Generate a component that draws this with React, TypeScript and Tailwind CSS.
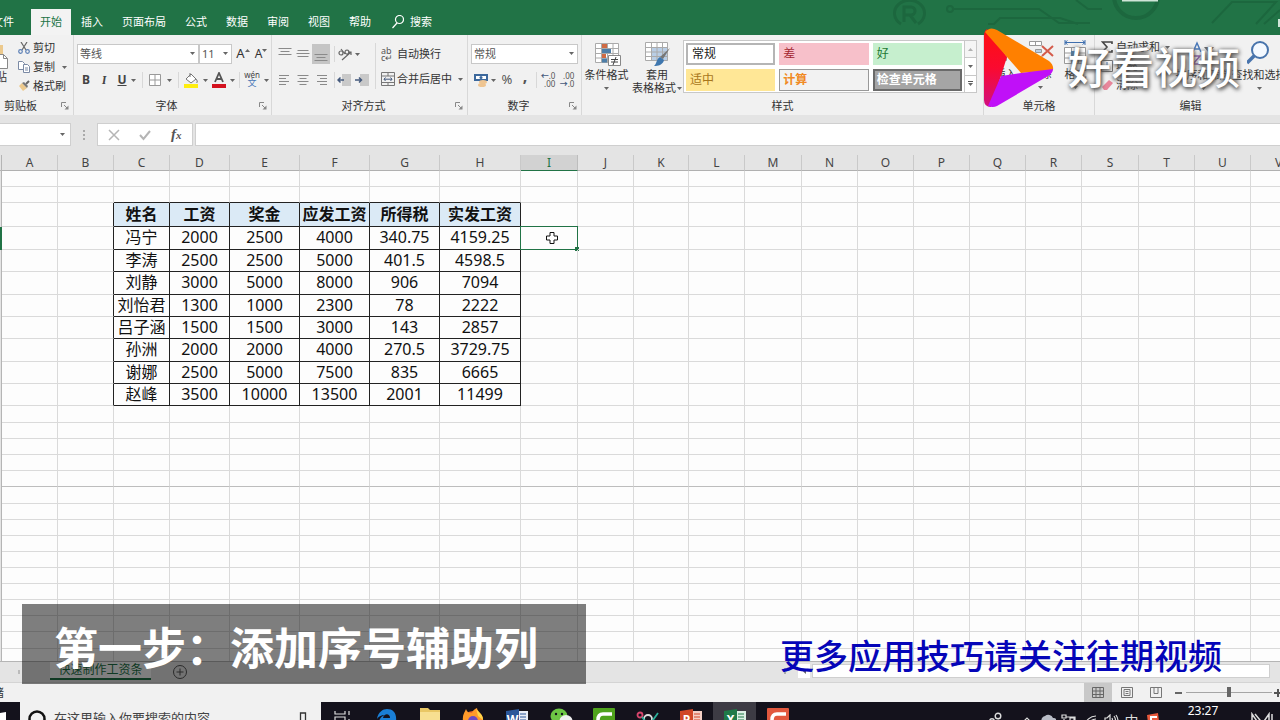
import React from 'react';

const columns = [
  { name: 'A', width: 'w-14' },
  { name: 'B', width: 'w-14' },
  { name: 'C', width: 'w-14' },
  { name: 'D', width: 'w-[60px]' },
  { name: 'E', width: 'w-[70px]' },
  { name: 'F', width: 'w-[70px]' },
  { name: 'G', width: 'w-[70px]' },
  { name: 'H', width: 'w-[81px]' },
  { name: 'I', width: 'w-[57px]' },
  { name: 'J', width: 'w-14' },
  { name: 'K', width: 'w-[55px]' },
  { name: 'L', width: 'w-14' },
  { name: 'M', width: 'w-[57px]' },
  { name: 'N', width: 'w-14' },
  { name: 'O', width: 'w-14' },
  { name: 'P', width: 'w-14' },
  { name: 'Q', width: 'w-14' },
  { name: 'R', width: 'w-14' },
  { name: 'S', width: 'w-[57px]' },
  { name: 'T', width: 'w-14' },
  { name: 'U', width: 'w-14' },
  { name: 'V', width: 'w-14' },
];

const FIRST_COL = 2;
const LAST_COL = 7;
const FIRST_ROW = 2;

const payroll = [
  ['姓名', '工资', '奖金', '应发工资', '所得税', '实发工资'],
  ['冯宁', '2000', '2500', '4000', '340.75', '4159.25'],
  ['李涛', '2500', '2500', '5000', '401.5', '4598.5'],
  ['刘静', '3000', '5000', '8000', '906', '7094'],
  ['刘怡君', '1300', '1000', '2300', '78', '2222'],
  ['吕子涵', '1500', '1500', '3000', '143', '2857'],
  ['孙洲', '2000', '2000', '4000', '270.5', '3729.75'],
  ['谢娜', '2500', '5000', '7500', '835', '6665'],
  ['赵峰', '3500', '10000', '13500', '2001', '11499'],
];

const S = 'h-4';
const M = 'h-[17px]';
const L = 'h-[22px]';
const X = 'h-[23px]';
const rowHeights = [S, S, 'h-6', X, L, X, L, L, X, L, L, M, S, S, S, S, M, S, S, S, S, S, S, S, S, M, S];

const Caret = ({ className = '' }: { className?: string }) => (
  <svg className={`h-[3px] w-[5px] shrink-0 ${className}`} viewBox="0 0 5 3" fill="#666">
    <path d="M0 0h5L2.5 3z" />
  </svg>
);

const Sep = () => <span className="h-4 w-px shrink-0 bg-[#d8d8d8]" />;

const IconButton = ({ label, className = 'w-[18px]', children }: { label: string; className?: string; children: React.ReactNode }) => (
  <button type="button" aria-label={label} className={`flex h-5 shrink-0 items-center justify-center ${className}`}>
    {children}
  </button>
);

const Lines = ({ y, widths, align = 'center' }: { y: number; widths: number[]; align?: 'left' | 'center' | 'right' }) => (
  <svg className="h-4 w-3.5" viewBox="0 0 14 16" stroke="#8a8a8a">
    {widths.map((w, i) => {
      const x = align === 'left' ? 1 : align === 'right' ? 13 - w : 7 - w / 2;
      return <path key={i} d={`M${x} ${y + i * 3}h${w}`} />;
    })}
  </svg>
);

const Group = ({ label, className, launcher, children }: { label: string; className: string; launcher?: boolean; children: React.ReactNode }) => (
  <section aria-label={label} className={`flex h-20 flex-col border-r border-[#d8d8d8] ${className}`}>
    <div className="flex h-[62px] min-w-0">{children}</div>
    <div className="flex h-[18px] items-center">
      <span className="flex-1 text-center leading-4">{label}</span>
      {launcher && (
        <button type="button" aria-label={`${label}设置`} className="w-3">
          <svg className="h-2 w-2" viewBox="0 0 8 8" fill="none" stroke="#888">
            <path d="M.5 5V.5H5M3 3l3 3" />
            <path d="M7.5 3.500v4h-4z" fill="#888" stroke="none" />
          </svg>
        </button>
      )}
    </div>
  </section>
);

const Picker = ({ label, value, className }: { label: string; value: string; className: string }) => (
  <span className={`relative block h-5 shrink-0 ${className}`}>
    <select aria-label={label} className="h-5 w-full appearance-none border border-[#c8c8c8] bg-white pl-0.5 text-[11px] leading-4 text-[#555]" defaultValue={value}>
      <option>{value}</option>
    </select>
    <Caret className="pointer-events-none absolute right-1 top-2" />
  </span>
);

const tabs = ['插入', '页面布局', '公式', '数据', '审阅', '视图', '帮助'];

const TitleBar = () => (
  <header className="relative flex h-[35px] shrink-0 items-end overflow-hidden bg-[#217346] text-white">
    <svg className="absolute right-0 top-0 h-[35px] w-[400px]" viewBox="0 0 400 35" fill="none" stroke="#1c673e" strokeWidth="2">
      <path d="M21 24A15 13 0 1 1 38 24" strokeWidth="3" />
      <path d="M24 22V7h7a4 4 0 0 1 0 8h-6m5 0 6 8" strokeWidth="3" />
      <circle cx="70" cy="9" r="3" />
      <path d="M73 9h86l20 14h31M108 24h6l6-6h60l18 6" />
      <path d="M196 0l12 9h14" />
      <circle cx="256" cy="-4" r="22" strokeWidth="4" />
      <path d="M332 23 352 2h44L376 24M384 24l16-14" />
      <path d="M242 .5h36" stroke="#cfe5d8" />
      <path d="M399 19v8" stroke="#cfe5d8" />
    </svg>
    <nav className="-ml-[17px] flex h-[26px] gap-px text-[11px] leading-6">
      <button type="button" className="mr-[7px] px-[9px]">文件</button>
      <button type="button" className="bg-[#f3f3f3] px-[9px] text-[#217346]">开始</button>
      {tabs.map((t) => (
        <button key={t} type="button" className="px-[9px]">{t}</button>
      ))}
      <button type="button" className="ml-0.5 flex items-center gap-[6px] px-[9px]">
        <svg className="h-3.5 w-3" viewBox="0 0 12 14" fill="none" stroke="white" strokeWidth="1.200">
          <circle cx="7.500" cy="4.500" r="4" />
          <path d="M5 8 .5 13" />
        </svg>
        搜索
      </button>
    </nav>
  </header>
);

const ClipboardGroup = () => (
  <Group label="剪贴板" className="-ml-5 w-[94px] shrink-0" launcher>
    <button type="button" className="flex w-8 flex-col items-center pt-[7px]">
      <svg className="h-[27px] w-6" viewBox="0 0 24 27">
        <path d="M2 3h17v20H2z" fill="#ecc98d" />
        <path d="M6 1h9v4H6z" fill="#777" />
        <path d="M13.500 12.500h6l4 4v10h-10z" fill="white" stroke="#888" />
        <path d="M19.500 12.500v4h4" fill="none" stroke="#888" />
      </svg>
      <span className="leading-4">粘贴</span>
      <Caret className="mt-1" />
    </button>
    <div className="ml-[6px] flex flex-col gap-[3px] pt-[5px]">
      <button type="button" className="flex h-4 items-center gap-[3px]">
        <svg className="h-3 w-3" viewBox="0 0 12 12" fill="none" stroke="#666" strokeWidth="1.200">
          <path d="M3 0l5 8M9 0 4 8" />
          <circle cx="2.500" cy="9.500" r="1.800" stroke="#5b7fb5" />
          <circle cx="9.500" cy="9.500" r="1.800" stroke="#5b7fb5" />
        </svg>
        剪切
      </button>
      <button type="button" className="flex h-4 items-center gap-[3px]">
        <svg className="h-3 w-3" viewBox="0 0 12 12" fill="white" stroke="#7b8aa5">
          <path d="M.5.5h4l2 2v6h-6z" />
          <path d="M5.500 3.500h4l2 2v6h-6zM7 7h3M7 9h3" />
        </svg>
        复制
        <Caret className="ml-1" />
      </button>
      <button type="button" className="flex h-4 items-center gap-[3px]">
        <svg className="h-3 w-3" viewBox="0 0 12 12">
          <path d="M1 6l3-3 5 5-4 3z" fill="#ecc98d" />
          <path d="M4 3l2-1 4 4-1 2z" fill="#777" />
          <path d="M8 4l3-3" stroke="#666" strokeWidth="2" />
        </svg>
        格式刷
      </button>
    </div>
  </Group>
);

const FontGroup = () => (
  <Group label="字体" className="w-[198px] shrink-0" launcher>
    <div className="flex flex-col gap-[6px] pl-[3px] pt-[9px]">
      <div className="flex items-center">
        <Picker label="字体名称" value="等线" className="w-[122px]" />
        <Picker label="字号" value="11" className="w-[33px]" />
        <IconButton label="增大字号" className="ml-[2px] w-[18px] text-[13px]">
          A<Caret className="mb-2 rotate-180" />
        </IconButton>
        <IconButton label="减小字号" className="w-[18px] text-[12px]">
          A<Caret className="mb-2" />
        </IconButton>
      </div>
      <div className="flex items-center text-[12px] text-[#444]">
        <IconButton label="加粗"><b>B</b></IconButton>
        <IconButton label="倾斜"><b className="font-serif italic">I</b></IconButton>
        <IconButton label="下划线"><b className="underline">U</b></IconButton>
        <Caret className="mr-1.5" />
        <Sep />
        <IconButton label="边框" className="w-6">
          <svg className="h-3 w-3" viewBox="0 0 12 12" fill="white" stroke="#999">
            <path d="M.5.5h11v11H.5zM6 .5v11M.5 6h11" />
          </svg>
        </IconButton>
        <Caret className="mr-1.5" />
        <Sep />
        <IconButton label="填充颜色" className="w-6">
          <svg className="h-4 w-4" viewBox="0 0 16 16" fill="none">
            <path d="M3 7l5-5 5 5-5 4z" fill="white" stroke="#777" />
            <path d="M7 5V1M13 7c1 1 2 3 .5 4" stroke="#777" />
            <path d="M1 12h14v4H1z" fill="#ffee10" />
          </svg>
        </IconButton>
        <Caret />
        <IconButton label="字体颜色" className="w-[22px]">
          <svg className="h-4 w-4" viewBox="0 0 16 16" fill="none">
            <path d="M4 10 8 1l4 9M5.500 7h5" stroke="#555" strokeWidth="1.800" />
            <path d="M1 12h14v4H1z" fill="#d4121f" />
          </svg>
        </IconButton>
        <Caret className="mr-1" />
        <Sep />
        <IconButton label="拼音" className="w-6 flex-col">
          <span className="text-[8px] leading-[6px]">wén</span>
          <span className="text-[9px] leading-[10px] text-[#4a78b8]">文</span>
        </IconButton>
        <Caret />
      </div>
    </div>
  </Group>
);

const Indent = ({ flip }: { flip?: boolean }) => (
  <svg className="h-3.5 w-3.5" viewBox="0 0 14 14">
    <path d="M5 1h9v12H5z" fill="#c9c9c9" />
    <path d={flip ? 'M0 7h6M4 4.500 6.500 7 4 9.500' : 'M1 7h6M3.500 4.500 1 7l2.500 2.500'} fill="none" stroke="#44597c" strokeWidth="1.500" />
  </svg>
);

const AlignGroup = () => (
  <Group label="对齐方式" className="w-[196px] shrink-0" launcher>
    <div className="flex flex-col gap-[6px] pl-1 pt-[9px]">
      <div className="flex items-center">
        <IconButton label="顶端对齐"><Lines y={2.5} widths={[13, 9, 13]} /></IconButton>
        <IconButton label="垂直居中"><Lines y={4.5} widths={[11, 13, 11]} /></IconButton>
        <IconButton label="底端对齐" className="w-[18px] bg-[#c5c5c5]"><Lines y={8.5} widths={[13, 9, 13]} /></IconButton>
        <span className="w-1" />
        <Sep />
        <IconButton label="方向" className="w-5">
          <svg className="h-4 w-4" viewBox="0 0 16 16" fill="none" stroke="#666" strokeWidth="1.200">
            <circle cx="4" cy="7" r="2" />
            <path d="M4 3l4 5M8 6a2 2 0 1 1 0 .1M5 14l9-8M11 6h3v3" />
          </svg>
        </IconButton>
        <Caret />
      </div>
      <div className="flex items-center">
        <IconButton label="左对齐"><Lines y={3.5} widths={[10, 7, 10, 7]} align="left" /></IconButton>
        <IconButton label="居中"><Lines y={3.5} widths={[11, 7, 11, 7]} /></IconButton>
        <IconButton label="右对齐"><Lines y={3.5} widths={[10, 7, 10, 7]} align="right" /></IconButton>
        <span className="w-1" />
        <Sep />
        <IconButton label="减少缩进"><Indent /></IconButton>
        <IconButton label="增加缩进"><Indent flip /></IconButton>
      </div>
    </div>
    <div className="my-2 ml-1 flex flex-col gap-[6px] border-l border-[#d8d8d8] pl-[5px] pt-px">
      <button type="button" className="flex h-5 items-center gap-0.5">
        <span className="w-3.5 text-left text-[9px] leading-[7px] text-[#555]">ab<br />c↵</span>
        自动换行
      </button>
      <button type="button" className="flex h-5 items-center gap-0.5">
        <svg className="h-3.5 w-3.5" viewBox="0 0 14 14" fill="none" stroke="#777">
          <path d="M.5.5h13v13H.5zM.5 4h13M.5 10.500h13M7 .5V4M7 10.500v3" />
          <path d="M3 7.200h8M4.500 5.500 3 7.200 4.500 9M9.500 5.500 11 7.200 9.500 9" stroke="#44597c" />
        </svg>
        合并后居中
        <Caret className="ml-1" />
      </button>
    </div>
  </Group>
);

const Decimal = ({ less }: { less?: boolean }) => (
  <span className="text-right text-[8px] leading-[8px] text-[#555]">
    {less ? '.00' : <><b className="text-[#44597c]">←</b>.0</>}
    <br />
    {less ? <><b className="text-[#44597c]">→</b>.0</> : '.00'}
  </span>
);

const NumberGroup = () => (
  <Group label="数字" className="w-[114px] shrink-0" launcher>
    <div className="flex flex-col gap-[6px] pl-[3px] pt-[9px]">
      <Picker label="数字格式" value="常规" className="w-[107px]" />
      <div className="flex items-center">
        <IconButton label="会计数字格式" className="w-5">
          <svg className="h-3.5 w-3.5" viewBox="0 0 14 14">
            <path d="M0 1h14v7H0z" fill="#3c689c" />
            <path d="M2 3h10v3H2z" fill="white" />
            <circle cx="7" cy="4.500" r="1.500" fill="#3c689c" />
            <ellipse cx="9" cy="9" rx="4" ry="2" fill="#efc592" />
            <ellipse cx="8" cy="12" rx="4" ry="2" fill="#efc592" />
          </svg>
        </IconButton>
        <Caret />
        <IconButton label="百分比" className="w-[22px] text-[13px] text-[#555]">%</IconButton>
        <IconButton label="千位分隔" className="w-3.5 pb-2 text-[16px] font-bold text-[#555]">,</IconButton>
        <span className="w-1" />
        <Sep />
        <IconButton label="增加小数位" className="w-[22px]"><Decimal /></IconButton>
        <IconButton label="减少小数位" className="w-4"><Decimal less /></IconButton>
      </div>
    </div>
  </Group>
);

const StylesGroup = () => (
  <Group label="样式" className="w-[402px] shrink-0">
    <button type="button" className="flex w-[49px] flex-col items-center pt-[6px]">
      <svg className="h-[26px] w-7" viewBox="0 0 28 26">
        <path d="M2.500 2.500h23v19h-23zM8.500 2.500v19M14.500 2.500v19M20 2.500v19M2.500 7.500h23M2.500 12.500h23M2.500 17h23" fill="white" stroke="#aaa" />
        <path d="M9 3h5v4H9z M9 13h4v4H9z" fill="#cf6a43" />
        <path d="M9 8h9v4H9zM9 17.500h5v4H9z" fill="#4d7ea8" />
        <path d="M15.500 14.500h12v10h-12z" fill="white" stroke="#888" />
        <path d="M18 18.500h7M18 21h7M23 16l-3 8" stroke="#444" />
      </svg>
      <span className="leading-4">条件格式</span>
      <Caret className="mt-1" />
    </button>
    <button type="button" className="flex w-[52px] flex-col items-center pt-[6px]">
      <svg className="h-[26px] w-7" viewBox="0 0 28 26">
        <path d="M2.500 1.500h22v18h-22z" fill="white" />
        <path d="M8 7h17v13H8z" fill="#b9cee6" />
        <path d="M2.500 1.500h22v18h-22zM8.500 1.500v18M14 1.500v18M19.500 1.500v18M2.500 6.500h22M2.500 11h22M2.500 15.500h22" fill="none" stroke="#aaa" />
        <path d="M27 7 20 18l-3-2z" fill="#777" />
        <path d="M17 16l4 3c-1 5-6 6-10 6 3-2 2-7 6-9z" fill="#3f77ae" />
      </svg>
      <span className="leading-4">套用</span>
      <span className="flex items-center gap-px whitespace-nowrap leading-[10px]">表格格式<Caret /></span>
    </button>
    <div className="mt-[5px] flex h-[53px] w-[294px] border border-[#c8c8c8] bg-white text-left text-[12px]">
      <div className="grid flex-1 grid-cols-3 gap-1 p-[2px]">
        <button type="button" className="border-2 border-[#b5b5b5] bg-white px-1 text-left text-[#222]">常规</button>
        <button type="button" className="bg-[#f7c0ca] px-1 text-left text-[#a3262f]">差</button>
        <button type="button" className="bg-[#c6efce] px-1 text-left text-[#1f7a35]">好</button>
        <button type="button" className="bg-[#ffe796] px-1 text-left text-[#a8761a]">适中</button>
        <button type="button" className="border border-[#999] bg-[#f2f2f2] px-[3px] text-left font-bold text-[#f08a24]">计算</button>
        <button type="button" className="border-2 border-[#6a6a6a] bg-[#a5a5a5] px-[2px] text-left font-bold text-white">检查单元格</button>
      </div>
      <div className="flex w-3 flex-col border-l border-[#c8c8c8]">
        <button type="button" aria-label="上一行" className="flex flex-1 items-center justify-center bg-[#ececec] opacity-50"><Caret className="rotate-180" /></button>
        <button type="button" aria-label="下一行" className="flex flex-1 items-center justify-center border-y border-[#c8c8c8]"><Caret /></button>
        <button type="button" aria-label="更多样式" className="flex flex-1 flex-col items-center justify-center gap-px">
          <span className="h-px w-[5px] bg-[#555]" />
          <Caret />
        </button>
      </div>
    </div>
  </Group>
);

const CellIcon = ({ kind }: { kind: 'insert' | 'delete' | 'format' }) => (
  <svg className="h-[26px] w-7" viewBox="0 0 28 26" fill="none" stroke="#999">
    {kind === 'format' ? (
      <>
        <path d="M3 2.500h20M5.500.5 3 2.500l2.500 2M20.500.5 23 2.500l-2.500 2M3 0v5M23 0v5" stroke="#3f6fae" />
        <path d="M2.500 7.500h21v16h-21zM9.500 7.500v16M16.500 7.500v16M2.500 13h21M2.500 18h21" fill="white" />
        <path d="M9 11h8v8H9z" fill="#4d7ea8" stroke="none" />
      </>
    ) : (
      <>
        <path d="M2.500 1.500h12v4h-12zM2.500 16.500h12v4h-12zM8.500 1.500v4M8.500 16.500v4" fill="white" />
        <path d="M8.500 9.500h6v3h-6z" fill="#b9cee6" />
        {kind === 'delete' ? <path d="M15 6l11 10M26 6 15 16" stroke="#d45b4b" strokeWidth="2" /> : <path d="M16 11h10" stroke="#4d7ea8" />}
      </>
    )}
  </svg>
);

const CellsGroup = () => (
  <Group label="单元格" className="w-[111px] shrink-0">
    <div className="flex pl-1">
      {([['插入', 'insert'], ['删除', 'delete'], ['格式', 'format']] as const).map(([label, kind]) => (
        <button key={kind} type="button" className="flex w-[35px] flex-col items-center pt-[5px]">
          <CellIcon kind={kind} />
          <span className="leading-4">{label}</span>
          <Caret className="mt-1" />
        </button>
      ))}
    </div>
  </Group>
);

const EditingGroup = () => (
  <Group label="编辑" className="w-[192px] shrink-0">
    <div className="flex w-20 shrink-0 flex-col gap-[3px] whitespace-nowrap pl-1.5 pt-[4px]">
      <button type="button" className="flex h-4 items-center gap-[3px]">
        <svg className="h-3 w-3" viewBox="0 0 12 12" fill="none" stroke="#444" strokeWidth="1.600">
          <path d="M11 3V1H1.500L6 6l-4.500 5H11V9" />
        </svg>
        自动求和
        <Caret className="ml-0.5" />
      </button>
      <button type="button" className="flex h-4 items-center gap-[3px]">
        <svg className="h-3 w-3" viewBox="0 0 12 12" fill="white" stroke="#777">
          <path d="M.5.5h11v11H.5z" />
          <path d="M6 2v6M3.500 6 6 8.500 8.500 6" stroke="#3f6fae" />
        </svg>
        填充
      </button>
      <button type="button" className="flex h-4 items-center gap-[3px]">
        <svg className="h-3 w-3" viewBox="0 0 12 12">
          <path d="M1 8l7-7 4 3-6 7H3z" fill="#e8869b" />
        </svg>
        清除
      </button>
    </div>
    <button type="button" className="flex w-14 shrink-0 flex-col items-center pt-[6px]">
      <svg className="h-[26px] w-6" viewBox="0 0 24 26" fill="none" strokeWidth="1.500">
        <path d="M2 11 6 2l4 9M3.500 8h5" stroke="#4a78b8" />
        <path d="M2 15h7l-7 8h7" stroke="#8a5ba5" />
        <path d="M13 6h10l-4 5v8l-2-2v-6z" fill="#666" />
      </svg>
      <span className="whitespace-nowrap leading-4">排序和筛选</span>
      <Caret className="mt-1" />
    </button>
    <button type="button" className="flex w-14 shrink-0 flex-col items-center pt-[6px]">
      <svg className="h-[26px] w-6" viewBox="0 0 24 26" fill="none" stroke="#4874ac">
        <circle cx="13" cy="9" r="8" fill="#f4f9ff" strokeWidth="2" />
        <path d="M7.500 14.500 0 22" strokeWidth="3.500" />
      </svg>
      <span className="whitespace-nowrap leading-4">查找和选择</span>
      <Caret className="mt-1" />
    </button>
  </Group>
);

const FormulaBar = () => (
  <div className="flex h-10 shrink-0 items-start bg-[#e4e4e4] pt-2">
    <div className="relative w-[71px]">
      <input aria-label="名称框" className="block h-[23px] w-full border border-l-0 border-[#cfcfcf] bg-white" />
      <Caret className="absolute right-1.5 top-[10px]" />
    </div>
    <div className="flex h-[23px] w-[26px] flex-col items-center justify-center gap-[2px]">
      <i className="h-0.5 w-0.5 bg-[#aaa]" />
      <i className="h-0.5 w-0.5 bg-[#aaa]" />
      <i className="h-0.5 w-0.5 bg-[#aaa]" />
    </div>
    <div className="flex h-[23px] w-24 items-center border border-[#cfcfcf] bg-white">
      <button type="button" aria-label="取消" className="flex flex-1 justify-center">
        <svg className="h-3 w-3" viewBox="0 0 12 12" stroke="#b5b5b5" strokeWidth="1.500"><path d="M1 1l10 10M11 1 1 11" /></svg>
      </button>
      <button type="button" aria-label="输入" className="flex flex-1 justify-center">
        <svg className="h-3 w-3" viewBox="0 0 12 12" fill="none" stroke="#b5b5b5" strokeWidth="2"><path d="M1 6l3.500 4L11 2" /></svg>
      </button>
      <button type="button" aria-label="插入函数" className="flex-1 font-['Liberation_Serif',serif] text-[15px] font-bold italic leading-5 text-[#555]">
        f<span className="text-[11px]">x</span>
      </button>
    </div>
    <input aria-label="编辑栏" className="ml-0.5 block h-[23px] min-w-0 flex-1 border border-r-0 border-[#cfcfcf] bg-white" />
  </div>
);

const cellBorder = (r: number, c: number) => {
  const lastRow = FIRST_ROW + payroll.length - 1;
  const inRows = r >= FIRST_ROW && r <= lastRow;
  const inCols = c >= FIRST_COL && c <= LAST_COL;
  const right = inRows && (inCols || c === FIRST_COL - 1) ? 'border-r-[#222]' : 'border-r-[#dadada]';
  const bottom = inCols && r >= FIRST_ROW - 1 && r <= lastRow ? 'border-b-[#222]' : r === 15 ? 'border-b-[#bdbdbd]' : 'border-b-[#dadada]';
  return `${right} ${bottom}`;
};

const Sheet = () => (
  <main className="min-h-0 flex-1 overflow-hidden border-b border-[#b5b5b5] bg-[#fdfdfd]">
    <table className="w-0 table-fixed border-separate border-spacing-0 text-center">
      <colgroup>
        <col className="w-0.5" />
        {columns.map((c) => <col key={c.name} className={c.width} />)}
      </colgroup>
      <thead>
        <tr className="h-4">
          <td className="border-b border-r border-[#b5b5b5] bg-[#e4e4e4] p-0" />
          {columns.map((c) => (
            <th
              key={c.name}
              scope="col"
              className={`border-b border-r p-0 text-[12px] font-normal leading-[15px] ${
                c.name === 'I' ? 'border-b-[#217346] border-r-[#bdbdbd] bg-[#d2d2d2] text-[#217346]' : 'border-b-[#b0b0b0] border-r-[#c9c9c9] bg-[#e4e4e4] text-[#444]'
              }`}
            >
              {c.name}
            </th>
          ))}
        </tr>
      </thead>
      <tbody>
        {rowHeights.map((height, r) => (
          <tr key={r} className={height}>
            <td className={`border-r p-0 ${r === 3 ? 'border-[#217346] bg-[#217346]' : 'border-[#b5b5b5] bg-[#e4e4e4]'}`} />
            {columns.map((col, c) => {
              const text = c >= FIRST_COL ? payroll[r - FIRST_ROW]?.[c - FIRST_COL] : undefined;
              const selected = r === 3 && col.name === 'I';
              const fill = text ? (r === FIRST_ROW ? 'pb-0.5 bg-[#dbeaf6] font-bold' : 'pb-0.5') : '';
              return (
                <td key={col.name} className={`relative whitespace-nowrap border-b border-r p-0 text-[16px] leading-[18px] text-[#111] ${cellBorder(r, c)} ${fill}`}>
                  {text}
                  {selected && (
                    <span className="absolute -inset-px flex items-center justify-center border border-[#217346] pl-1.5">
                      <svg className="h-3 w-3" viewBox="0 0 12 12" fill="white" stroke="#111">
                        <path d="M4 .5h4V4h3.500v4H8v3.500H4V8H.5V4H4z" />
                      </svg>
                      <i className="absolute -bottom-0.5 -right-0.5 h-1 w-1 bg-[#217346]" />
                    </span>
                  )}
                </td>
              );
            })}
          </tr>
        ))}
      </tbody>
    </table>
  </main>
);

const SheetTabs = () => (
  <div className="flex h-5 shrink-0 items-start bg-[#e4e4e4]">
    <span className="flex h-full w-[50px] items-center pl-[18px]">
      <i className="h-1 w-0.5 bg-[#bbb]" />
    </span>
    <button type="button" className="h-[18px] w-[101px] whitespace-nowrap border-b-2 border-[#217346] bg-white text-[12px] leading-4 text-[#217346]">快速制作工资条</button>
    <button type="button" aria-label="新工作表" className="ml-[22px] mt-[3px]">
      <svg className="h-3.5 w-3.5" viewBox="0 0 14 14" fill="none" stroke="#555">
        <circle cx="7" cy="7" r="6.500" />
        <path d="M7 3.500v7M3.500 7h7" />
      </svg>
    </button>
    <div className="ml-auto mr-2.5 mt-0.5 flex h-[14px] w-[488px] items-center">
      <span className="flex w-4 flex-col items-start gap-[2px] pl-0.5">
        <i className="h-0.5 w-0.5 bg-[#aaa]" />
        <i className="h-0.5 w-0.5 bg-[#aaa]" />
      </span>
      <button type="button" aria-label="向左滚动" className="flex h-full w-3 items-center justify-center bg-white"><Caret className="rotate-90" /></button>
      <span className="ml-0.5 h-full flex-1 border border-[#cfcfcf] bg-white" />
    </div>
  </div>
);

const StatusBar = () => (
  <div className="flex h-5 shrink-0 items-center border-t border-[#d4d4d4] bg-[#f1f1f1] text-[11px]">
    <span className="-ml-[18px] leading-4">就绪</span>
    <div className="ml-auto flex h-full items-center">
      <button type="button" aria-label="普通" className="flex h-full w-7 items-center justify-center bg-[#c8c8c8]">
        <svg className="h-[11px] w-3" viewBox="0 0 12 11" fill="none" stroke="#666"><path d="M.5.5h11v10H.5zM4 .5v10M8 .5v10M.5 4h11M.5 7.500h11" /></svg>
      </button>
      <button type="button" aria-label="页面布局视图" className="flex w-[30px] justify-center">
        <svg className="h-[11px] w-3" viewBox="0 0 12 11" fill="none" stroke="#777"><path d="M.5.5h11v10H.5zM3 2.500h6v6H3zM4.500 4.500h3M4.500 6.500h3" /></svg>
      </button>
      <button type="button" aria-label="分页预览" className="flex w-7 justify-center">
        <svg className="h-[11px] w-3" viewBox="0 0 12 11" fill="none" stroke="#777"><path d="M.5.5h11v10H.5zM4 .5v6h4v-6" /></svg>
      </button>
      <button type="button" aria-label="缩小" className="flex w-4 justify-center"><i className="h-0.5 w-[7px] bg-[#666]" /></button>
      <input
        type="range"
        aria-label="缩放"
        defaultValue={50}
        className="h-3 w-[86px] appearance-none bg-transparent [&::-webkit-slider-runnable-track]:h-px [&::-webkit-slider-runnable-track]:bg-[#a5a5a5] [&::-webkit-slider-thumb]:-mt-[5px] [&::-webkit-slider-thumb]:h-2.5 [&::-webkit-slider-thumb]:w-1 [&::-webkit-slider-thumb]:appearance-none [&::-webkit-slider-thumb]:bg-[#666]"
      />
      <button type="button" aria-label="放大" className="flex w-2 justify-end overflow-hidden">
        <svg className="h-2 w-2" viewBox="0 0 8 8" stroke="#555" strokeWidth="2"><path d="M6 0v8M2 4h6" /></svg>
      </button>
    </div>
  </div>
);

const OfficeTile = ({ letter, back, side }: { letter: string; back: string; side: string }) => (
  <svg className="h-6 w-6" viewBox="0 0 24 24">
    <path d="M12 3h11v18H12z" fill={side} />
    <path d="M15 6h6M15 9h6M15 12h6M15 15h6" stroke={back} />
    <path d="M1 3l13-2v22L1 21z" fill={back} />
    <text x="7.500" y="16" textAnchor="middle" fontSize="12" fontWeight="bold" fill="white">{letter}</text>
  </svg>
);

const CamtasiaTile = ({ color }: { color: string }) => (
  <svg className="h-6 w-6" viewBox="0 0 24 24" fill="none">
    <rect x="1" y="0" width="22" height="23" rx="1" fill={color} />
    <path d="M20 6h-9q-5 0-5 6t5 6h9" stroke="white" strokeWidth="3.500" />
  </svg>
);

const apps = [
  {
    name: '任务视图',
    icon: (
      <svg className="h-5 w-5" viewBox="0 0 20 20" fill="none" stroke="#ddd" strokeWidth="1.200">
        <path d="M2 1v3h10V1M2 7h10v7H2zM2 19v-2h10v2M16 1v4M16 9v10" />
      </svg>
    ),
  },
  {
    name: 'Edge',
    icon: (
      <svg className="h-6 w-6" viewBox="0 0 24 24" fill="none">
        <path d="M3 11C4 4 9 1 13 1c6 0 10 4 9 12H9c1 5 7 6 12 3v5C13 25 4 22 5 14c.5-4 3-6 6-7-4 0-7 2-8 4z" fill="#1a7fd6" />
        <path d="M9 10h7c0-5-6-5-7 0z" fill="#14121c" />
      </svg>
    ),
  },
  {
    name: '文件资源管理器',
    icon: (
      <svg className="h-6 w-6" viewBox="0 0 24 24">
        <path d="M2 0h8l2 2h10v20H2z" fill="#e9c765" />
        <path d="M2 4h20v18H2z" fill="#f7df91" />
        <path d="M6 12h12v10H6z" fill="#58a5d8" />
      </svg>
    ),
  },
  {
    name: 'Firefox',
    icon: (
      <svg className="h-6 w-6" viewBox="0 0 24 24">
        <circle cx="12" cy="13" r="10" fill="#f2682a" />
        <path d="M2 13C1 7 4 4 5 1c1 3 3 4 6 4 1-3 3-4 5-5 0 4 7 6 6 13z" fill="#ff9a2a" />
        <path d="M15 0c1 4 7 5 7 12l-5-4z" fill="#ffd54a" />
        <circle cx="12" cy="13" r="5" fill="#6b4bc4" />
      </svg>
    ),
  },
  { name: 'Word', icon: <OfficeTile letter="W" back="#2b579a" side="#e8eef8" /> },
  {
    name: '微信',
    icon: (
      <svg className="h-6 w-6" viewBox="0 0 24 24">
        <ellipse cx="10" cy="8" rx="8.500" ry="7.500" fill="#6cc644" />
        <ellipse cx="17" cy="13" rx="6.500" ry="6" fill="#eee" />
        <circle cx="7" cy="6" r="1.200" fill="#14121c" />
        <circle cx="13" cy="6" r="1.200" fill="#14121c" />
      </svg>
    ),
  },
  { name: 'Camtasia', icon: <CamtasiaTile color="#4fa31c" /> },
  {
    name: '剪辑',
    icon: (
      <svg className="h-5 w-6" viewBox="0 0 24 20" fill="none" strokeWidth="1.800">
        <circle cx="4" cy="5" r="2.500" stroke="#d8456d" />
        <circle cx="12" cy="9" r="4" stroke="#ddd" />
        <path d="M6 7l8 10M22 3 12 17" stroke="#2cb09a" />
      </svg>
    ),
  },
  { name: 'PowerPoint', icon: <OfficeTile letter="P" back="#d04727" side="#f5d0c6" /> },
  { name: 'Excel', icon: <OfficeTile letter="X" back="#1f7a48" side="#dcefe4" /> },
  { name: '录像机', icon: <CamtasiaTile color="#e2583e" /> },
];

const tray = [
  { name: '显示隐藏的图标', path: <path d="M3 9l5-5 5 5" /> },
  { name: '云盘', path: <path d="M2 8a4 4 0 0 1 3-6 5 5 0 0 1 8 2 3 3 0 0 1 1 6H3z" fill="#b9bcc6" stroke="none" /> },
  { name: '电源', path: <path d="M5 3h9v7H3V5M1 1h4v3H1zM9 4h4v5H9z" /> },
  { name: '网络', path: <path d="M3 12A11 11 0 0 1 14 2M6 12a8 8 0 0 1 8-7M9 12a5 5 0 0 1 5-4" /> },
  { name: '音量', path: <path d="M2 4h2l3-3v11l-3-3H2zM9 4q1 2 0 5M11 2q3 4 0 9M13 1q4 6 0 11" /> },
];

const Taskbar = () => (
  <footer className="h-[18px] shrink-0 overflow-hidden bg-[#14121c] text-white">
    <div className="flex h-10 items-center">
      <button type="button" aria-label="开始" className="flex h-full w-5 items-center">
        <svg className="h-5 w-1.5" viewBox="0 0 6 20" fill="white"><path d="M0 1l6-1v9H0zM0 11h6v9l-6-1z" /></svg>
      </button>
      <div className="flex h-full w-[301px] shrink-0 items-center bg-[#f1f1f1] px-2">
        <svg className="mb-1.5 h-[18px] w-[18px]" viewBox="0 0 18 18" fill="none" stroke="#111" strokeWidth="2.500"><circle cx="9" cy="9" r="7.500" /></svg>
        <input
          aria-label="搜索"
          placeholder="在这里输入你要搜索的内容"
          className="mb-2 ml-2 h-5 min-w-0 flex-1 bg-transparent text-[13px] leading-5 placeholder:text-[#444] placeholder:opacity-100"
        />
        <svg className="mr-1 h-5 w-3" viewBox="0 0 12 20" fill="none" stroke="#333" strokeWidth="1.300"><path d="M3.500 1h5v11h-5zM1 9v5h10V9M6 14v5" /></svg>
      </div>
      <div className="flex h-full w-[479px] shrink-0 pb-1">
        {apps.map((app) => (
          <button key={app.name} type="button" aria-label={app.name} className={`flex flex-1 items-center justify-center ${app.name === 'Excel' ? 'bg-[#3d3b44]' : ''}`}>
            {app.icon}
          </button>
        ))}
      </div>
      <div className="ml-auto flex h-full shrink-0 items-center">
        <button type="button" aria-label="人脉" className="flex w-10 justify-center">
          <svg className="h-5 w-4" viewBox="0 0 16 20" fill="none" stroke="#ddd" strokeWidth="1.400">
            <circle cx="10" cy="4" r="2.800" />
            <circle cx="4" cy="9" r="2.300" />
            <path d="M6 12q4-7 9 0M1 17q3-7 7 0" />
          </svg>
        </button>
        {tray.map((t) => (
          <button key={t.name} type="button" aria-label={t.name} className="flex w-[21px] justify-center">
            <svg className="h-4 w-4" viewBox="0 0 16 16" fill="none" stroke="#ddd" strokeWidth="1.200">{t.path}</svg>
          </button>
        ))}
        <button type="button" className="w-[21px] pb-1 text-[14px] text-[#ddd]">中</button>
        <button type="button" aria-label="输入法" className="flex w-[21px] justify-center">
          <svg className="h-5 w-4" viewBox="0 0 16 20" fill="none"><path d="M2 3l11-2 2 16-11 2z" fill="#e8593c" /><path d="M12 5H6v4h5v4H5" stroke="white" strokeWidth="2" /></svg>
        </button>
        <time className="h-full w-20 text-center text-[12px] leading-[18px]">23:27</time>
        <button type="button" aria-label="通知" className="flex w-[37px] justify-center">
          <svg className="h-5 w-6" viewBox="0 0 24 20" fill="none" stroke="#ddd" strokeWidth="1.500"><path d="M2 18V2l7 10M12 12l7-10v14M5 2l9 11M22 18V2" /></svg>
        </button>
      </div>
    </div>
  </footer>
);

const Watermark = () => (
  <div className="pointer-events-none absolute right-10 top-7 flex items-center gap-3.5">
    <svg className="h-20 w-[70px]" viewBox="0 0 70 80">
      <defs>
        <linearGradient id="red" x1="0" y1="0" x2="0" y2="1">
          <stop offset="0" stopColor="#ff1010" />
          <stop offset="0.500" stopColor="#fa0a30" />
          <stop offset="1" stopColor="#d01080" />
        </linearGradient>
      </defs>
      <path d="M0 8Q0 3 3 1L23 29 7 79Q0 79 0 72z" fill="url(#red)" />
      <path d="M1 4Q6-2 13 2L65 33Q70 37 69 42L37 45 23 29z" fill="#ff8000" />
      <path d="M69 41Q69 45 64 48L13 78Q9 80 4 78L17 48 37 45z" fill="#c010f8" />
    </svg>
    <span className="text-[43px] font-medium leading-[60px] text-white [text-shadow:1px_2px_4px_#444,0_0_4px_#777]">好看视频</span>
  </div>
);

export default function App() {
  return (
    <div className="relative flex h-screen flex-col overflow-hidden bg-[#e4e4e4] font-['Noto_Sans','Noto_Sans_CJK_SC',sans-serif] text-[11px] text-[#333]">
      <TitleBar />
      <div className="flex h-20 shrink-0 overflow-hidden bg-[#f1f1f1]">
        <ClipboardGroup />
        <FontGroup />
        <AlignGroup />
        <NumberGroup />
        <StylesGroup />
        <CellsGroup />
        <EditingGroup />
      </div>
      <FormulaBar />
      <Sheet />
      <SheetTabs />
      <StatusBar />
      <Taskbar />
      <Watermark />
      <p className="absolute bottom-9 left-[22px] h-20 bg-black/50 pl-8 pr-12 text-[44px] font-bold leading-[88px] text-white">第一步：添加序号辅助列</p>
      <p className="absolute bottom-11 right-[58px] text-[34px] font-medium leading-10 text-[#0505b8]">更多应用技巧请关注往期视频</p>
    </div>
  );
}
